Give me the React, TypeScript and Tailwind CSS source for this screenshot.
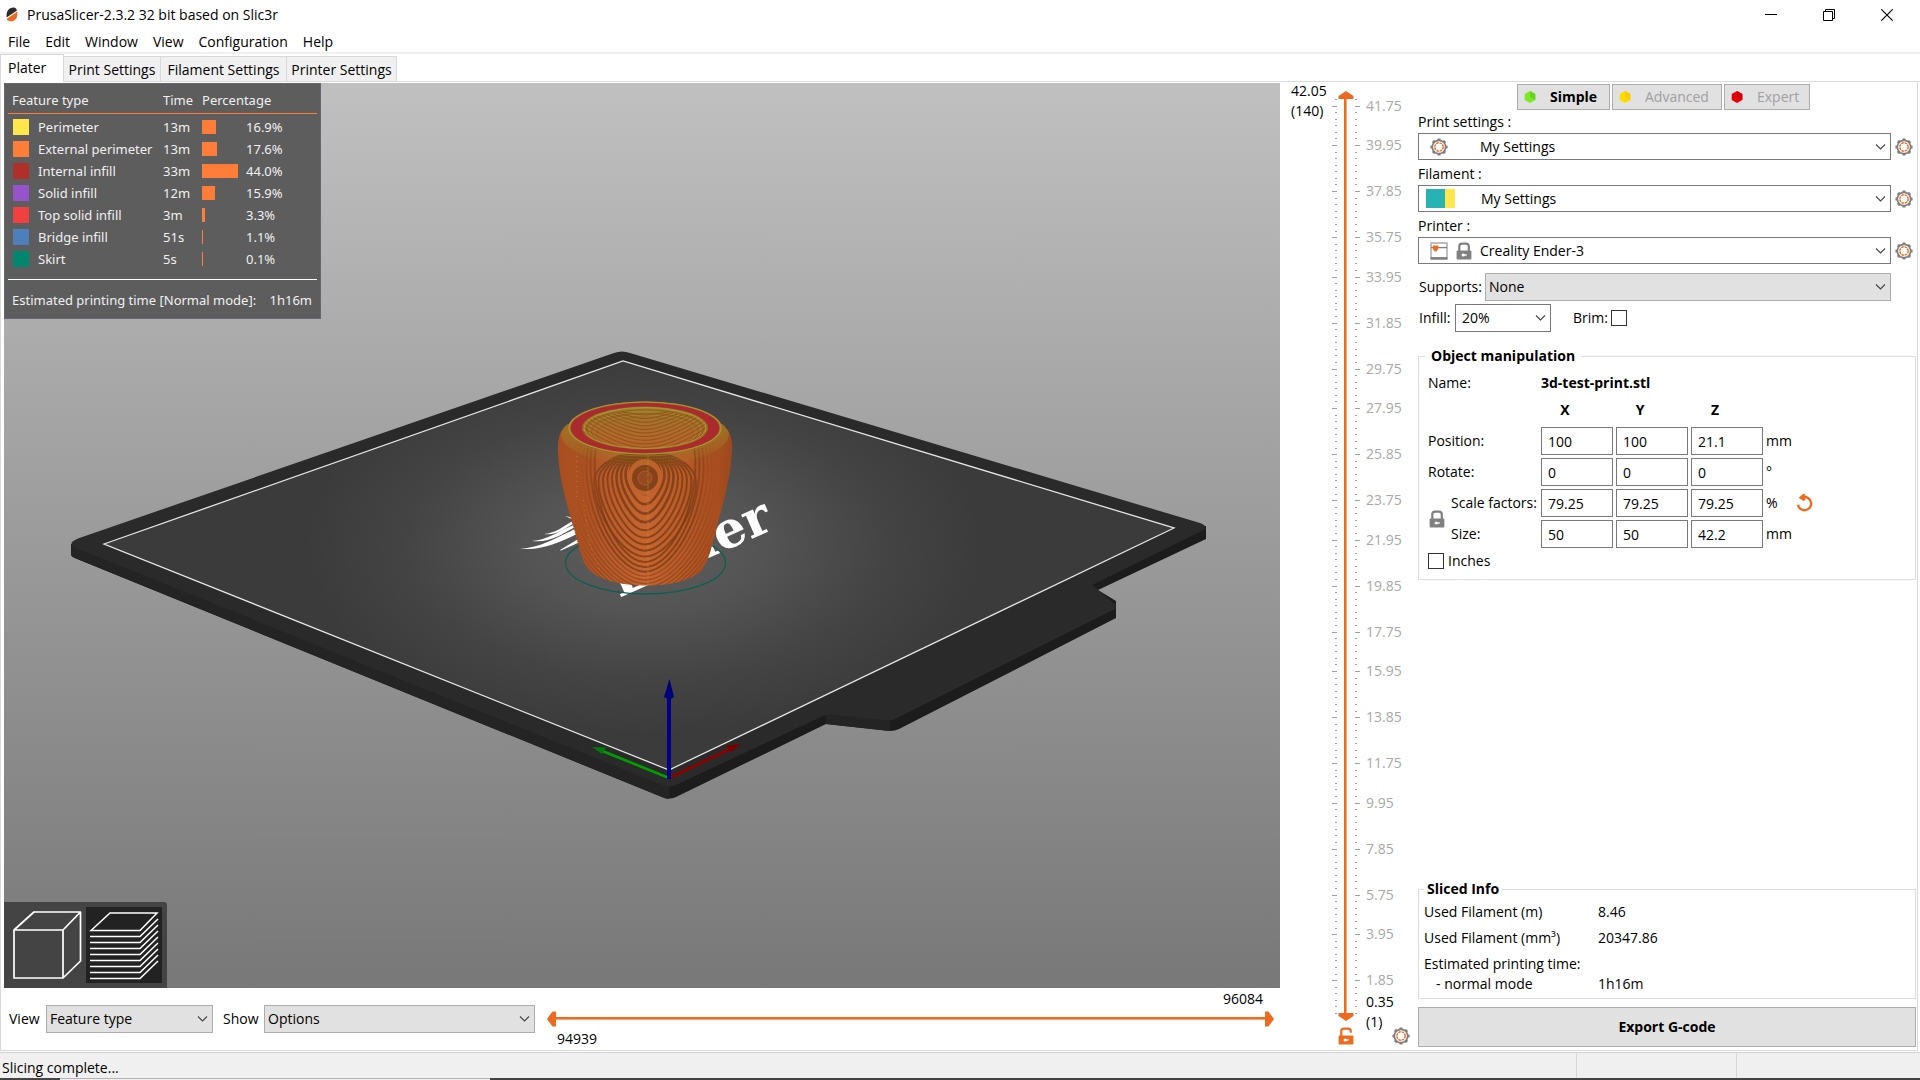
import React, { useState } from "react";

const ORANGE = "#ed6b21";

/* ---------- icons ---------- */

function Gear() {
  return (
    <svg width="18" height="18" viewBox="0 0 18 18" fill="none" aria-hidden="true">
      <circle cx="9" cy="9" r="6.7" stroke="#808080" strokeWidth="1.7" />
      {[0, 45, 90, 135, 180, 225, 270, 315].map((a) => (
        <rect key={a} x="7.4" y="0.4" width="3.2" height="2.4" rx="0.6" fill="#808080" transform={`rotate(${a} 9 9)`} />
      ))}
      <circle cx="9" cy="9" r="4.2" stroke={ORANGE} strokeWidth="1.4" strokeDasharray="2.5 0.8" />
    </svg>
  );
}

function Lock({ open = false, color = "#808080" }: { open?: boolean; color?: string }) {
  return (
    <svg width="16" height="18" viewBox="0 0 16 18" fill="none" aria-hidden="true">
      <path d={open ? "M3.3 9V4.2Q3.3 1.6 6 1.6H10Q12.8 1.6 12.8 4.2V5.8" : "M3.3 9V4.6Q3.3 1.6 6 1.6H10Q12.8 1.6 12.8 4.6V9"} stroke={color} strokeWidth="2.2" />
      <rect x="0.6" y="8.6" width="14.8" height="9" rx="1" fill={color} />
      <circle cx="7.2" cy="13" r="1.6" fill="#fff" />
      <rect x="7.5" y="12.3" width="3.2" height="1.4" fill="#fff" />
    </svg>
  );
}

function Chevron() {
  return (
    <svg width="11" height="7" viewBox="0 0 11 7" fill="none" className="pointer-events-none absolute top-1/2 right-[5px] -translate-y-1/2" aria-hidden="true">
      <path d="M1 1L5.5 5.5L10 1" stroke="#444" strokeWidth="1.1" />
    </svg>
  );
}

function PrinterIcon() {
  return (
    <svg width="18" height="18" viewBox="0 0 18 18" fill="none" aria-hidden="true">
      <path d="M1 1H17V17H1Z" stroke="#a8a8a8" strokeWidth="1.4" />
      <path d="M1 5.6H17" stroke="#808080" strokeWidth="1.3" />
      <path d="M1 15.6H17V17H1Z" fill="#808080" stroke="#808080" />
      <path d="M2.8 3.6H8.2V7L6.4 9.4H4.8L2.8 7Z" fill={ORANGE} />
    </svg>
  );
}

function Undo() {
  return (
    <svg width="18" height="20" viewBox="0 0 18 20" fill="none" aria-hidden="true">
      <path d="M7 4.2A6.6 6.6 0 1 1 2 11.6" stroke={ORANGE} strokeWidth="2.4" />
      <path d="M2.6 4.8L7.4 0.8L9.4 1.6V7L7.6 8Z" fill={ORANGE} />
    </svg>
  );
}

function Hex({ main, dark }: { main: string; dark: string }) {
  return (
    <svg width="12" height="12" viewBox="0 0 12 12" aria-hidden="true">
      <path d="M6 0L11.3 3V9L6 12L0.7 9V3Z" fill={main} />
      <path d="M6 0L11.3 3V9L6 6Z" fill={dark} />
    </svg>
  );
}

function Logo() {
  return (
    <svg width="12" height="15" viewBox="0 0 12 15" aria-hidden="true">
      <path d="M0.6 10.6C0 4 3 0.2 8.2 0.6Q10.6 1 11 3.4Z" fill="#2b2b2b" />
      <path d="M11.4 4.4C12 11 9 14.8 3.8 14.3Q1.2 14 0.8 11.8Z" fill={ORANGE} />
    </svg>
  );
}

/* ---------- 3D scene ---------- */

const BANDS = Array.from({ length: 34 }, (_, i) => i);

function grain(i: number) {
  const depth = 150 * (1 - Math.exp(-(i + 1.3) / 13));
  const half = 15 + 4.5 * i;
  const bottom = 480 + depth;
  const shoulder = 468 + depth * 0.3;
  if (i < 9) {
    const top = 460 - i;
    const waist = 474 + i;
    return `M645 ${top}C${645 - half * 0.7} ${top} ${645 - half} ${waist - 12} ${645 - half} ${waist}C${645 - half} ${waist + depth * 0.4} ${645 - half * 0.45} ${bottom} 645 ${bottom}S${645 + half} ${waist + depth * 0.4} ${645 + half} ${waist}C${645 + half} ${waist - 12} ${645 + half * 0.7} ${top} 645 ${top}`;
  }
  return `M${645 - half * 0.85} 438C${645 - half * 1.1} ${shoulder} ${645 - half * 0.5} ${bottom} 645 ${bottom}S${645 + half * 1.1} ${shoulder} ${645 + half * 0.85} 438`;
}

const BODY =
  "M568 424C560 430 558 438 558 448C558 473 566 503 573 525C580 549 582 562 589 570C600 580 622 585.500 646 585.500C672 585.500 692 580 702 570C709 560 712 546 718 522C725 496 732 470 732 446C732 437 729 430 722 424Z";

function Scene() {
  return (
    <svg viewBox="4 83 1276 905" preserveAspectRatio="xMidYMid slice" className="absolute inset-0 h-full w-full" role="img" aria-label="Sliced model on the print bed">
      <defs>
        <radialGradient id="bed" gradientUnits="userSpaceOnUse" cx="0" cy="0" r="1" gradientTransform="translate(645 545) scale(340 190)">
          <stop offset="0" stopColor="#5e5e5e" />
          <stop offset="0.35" stopColor="#545454" />
          <stop offset="0.7" stopColor="#444444" />
          <stop offset="1" stopColor="#3b3b3b" />
        </radialGradient>
        <linearGradient id="body" x1="0" x2="1" y1="0" y2="0">
          <stop offset="0" stopColor="#a44c1e" />
          <stop offset="0.2" stopColor="#b3562a" />
          <stop offset="0.5" stopColor="#c6652f" />
          <stop offset="0.8" stopColor="#b45626" />
          <stop offset="1" stopColor="#a34c1e" />
        </linearGradient>
        <linearGradient id="rim" x1="0" x2="0" y1="0" y2="1">
          <stop offset="0" stopColor="#a8842c" />
          <stop offset="1" stopColor="#a8842c" stopOpacity="0" />
        </linearGradient>
        <linearGradient id="hole" x1="0" x2="0" y1="0" y2="1">
          <stop offset="0" stopColor="#9c7a2a" />
          <stop offset="1" stopColor="#b8622a" />
        </linearGradient>
        <linearGradient id="edge" x1="0" x2="1" y1="0" y2="0">
          <stop offset="0" stopColor="#a84e20" />
          <stop offset="0.1" stopColor="#ab5021" />
          <stop offset="0.26" stopColor="#ab5021" stopOpacity="0" />
          <stop offset="0.76" stopColor="#a84e20" stopOpacity="0" />
          <stop offset="0.92" stopColor="#a84e20" />
          <stop offset="1" stopColor="#9c481c" />
        </linearGradient>
        <clipPath id="bodyClip">
          <path d={BODY} />
        </clipPath>
        <clipPath id="holeClip">
          <ellipse cx="645" cy="428" rx="63" ry="21" />
        </clipPath>
      </defs>

      {/* bed slab: sides, then top */}
      <path d="M71 544V555Q72 557 76 558.500L662 797Q669 800 676 797L826 724L890 731Q895 731 899 729L1116 618V601L1098 590L1206 539V526Z" fill="#1c1c1c" />
      <path d="M71 544V555Q72 557 76 558.500L662 797Q666 799 669 799V780Z" fill="#242424" />
      <path d="M826 710V724L890 731V716Z" fill="#242424" />
      <path d="M72 542Q74 540 78 538.500L614 353Q622 350 630 353L1200 523Q1208 526 1204 530L1092 585L1115 604Q1118 607 1113 610L895 719Q891 721 887 720.500L830 714.500Q827 714 823 716L676 785Q669 788 662 785L76 548Q70 545 72 542Z" fill="#2a2a2a" />
      <path d="M104 544L623 361L1174 528L669 770Z" fill="url(#bed)" stroke="#e6e6e6" strokeWidth="1.3" />

      {/* bed branding */}
      <text transform="translate(619 598) rotate(-24)" fontFamily="'DejaVu Serif', serif" fontWeight="700" fontSize="51" fill="#fff">
        Ender
      </text>
      <g fill="#fff">
        <path d="M520 548.500C540 548 556 538 577 528L577 534C558 543 540 551 520 548.500Z" />
        <path d="M532 541C548 540 560 530 576 524L577 526C560 535 550 543 532 541Z" />
        <path d="M544 534C556 533 562 527 576 519L577 521.500C564 529 556 536 544 534Z" />
        <path d="M560 550L580 538V542L561 550.500Z" />
        <path d="M565 516L574 518V520Z" />
      </g>
      <ellipse cx="645.500" cy="563" rx="80" ry="31" fill="none" stroke="#0b5f50" strokeWidth="1.3" />

      {/* printed cup */}
      <path d={BODY} fill="url(#body)" />
      <g clipPath="url(#bodyClip)" fill="none">
        {BANDS.map((i) => (
          <path key={i} d={grain(i)} stroke="#7c3d16" strokeWidth={i < 4 ? 2.6 : i < 12 ? 1.9 : 1.4} strokeOpacity={i < 12 ? 0.85 : 0.55} />
        ))}
        <ellipse cx="645" cy="477" rx="17" ry="18" fill="#bf612d" />
        <ellipse cx="645" cy="478" rx="13" ry="13" fill="#85411a" />
        <ellipse cx="645" cy="478" rx="7" ry="7" fill="#94491f" stroke="#b25a2a" strokeWidth="1" />
        <path d={BODY} fill="url(#edge)" />
        <path d="M648 455V585" stroke="#c88a3a" strokeOpacity="0.6" strokeDasharray="4 2" />
        <path d="M577 456V500M583 500L590 545L600 570" stroke="#d99a4a" strokeOpacity="0.6" strokeDasharray="1 4" />
        <ellipse cx="645" cy="434" rx="84" ry="31" fill="url(#rim)" />
        {[0, 1, 2, 3, 4].map((i) => (
          <ellipse key={i} cx="645" cy={430 + i * 2} rx={77 + i * 2} ry={26 + i} stroke="#8c7a20" strokeOpacity={0.8 - i * 0.14} strokeWidth="1" strokeDasharray={i ? "2 1" : undefined} />
        ))}
      </g>
      <ellipse cx="645" cy="428" rx="77" ry="26.500" fill="#a87a2c" />
      <ellipse cx="645" cy="428" rx="76" ry="26" fill="none" stroke="#a39a30" strokeWidth="1" />
      <ellipse cx="645" cy="428" rx="74.500" ry="25.200" fill="#a92b2d" />
      <ellipse cx="645" cy="428" rx="63" ry="21.500" fill="url(#hole)" />
      <g clipPath="url(#holeClip)" fill="none">
        {Array.from({ length: 6 }, (_, i) => (
          <ellipse key={i} cx="645" cy={428 + i * 1.2} rx={61 - i * 2.5} ry={20 - i * 0.6} stroke={i % 2 ? "#8a5a1c" : "#a3902e"} strokeOpacity={0.85 - i * 0.1} strokeWidth="1" />
        ))}
        {Array.from({ length: 12 }, (_, i) => (
          <path key={i} d={`M${622 - i * 5} ${412 + i * 0.8}C${636 - i * 2.4} ${414 + i * 3.4} ${642 - i} ${415 + i * 3.6} 645 ${415 + i * 3.6}S${654 + i * 2.4} ${414 + i * 3.4} ${668 + i * 5} ${412 + i * 0.8}`} stroke="#8c4a1c" strokeOpacity="0.8" strokeWidth="1" />
        ))}
        <path d="M600 412Q645 402 690 412" stroke="#6b4a70" strokeWidth="1" strokeDasharray="4 3" />
      </g>
      <ellipse cx="645" cy="428" rx="61" ry="20.500" fill="none" stroke="#a39a30" strokeWidth="1" />

      {/* axes */}
      <path d="M669 778L600 750" stroke="#00a000" strokeWidth="2.600" />
      <path d="M592 747L606 747.500L602 754Z" fill="#007a10" />
      <path d="M669 778L730 749" stroke="#8c0000" strokeWidth="2.800" />
      <path d="M741 744L726 745.500L731 752Z" fill="#780000" />
      <path d="M669 779V696" stroke="#00008c" strokeWidth="4" />
      <path d="M669.500 679L664 697Q669 701 674 697Z" fill="#00007c" />
    </svg>
  );
}

/* ---------- legend ---------- */

const FEATURES = [
  { name: "Perimeter", color: "#ffe64d", time: "13m", pct: "16.9%", bar: 14 },
  { name: "External perimeter", color: "#ff7d38", time: "13m", pct: "17.6%", bar: 15 },
  { name: "Internal infill", color: "#b02f2a", time: "33m", pct: "44.0%", bar: 36 },
  { name: "Solid infill", color: "#9654cc", time: "12m", pct: "15.9%", bar: 13 },
  { name: "Top solid infill", color: "#f04040", time: "3m", pct: "3.3%", bar: 3 },
  { name: "Bridge infill", color: "#4d80ba", time: "51s", pct: "1.1%", bar: 1 },
  { name: "Skirt", color: "#008770", time: "5s", pct: "0.1%", bar: 1 },
];

function Legend() {
  return (
    <div className="absolute top-0 left-0 w-[317px] border border-[#66666e] bg-[#5d5d5d] px-[3px] pt-[5px] pb-2 font-['Noto_Sans',sans-serif] text-[13px] leading-5 text-[#f0f0f0]">
      <table className="w-full table-fixed border-separate border-spacing-0 text-left">
        <colgroup>
          <col className="w-[30px]" />
          <col className="w-[125px]" />
          <col className="w-[39px]" />
          <col className="w-[44px]" />
          <col />
        </colgroup>
        <thead>
          <tr className="h-[25px] whitespace-nowrap [&>th]:border-b [&>th]:border-[#ff7d38] [&>th]:p-0 [&>th]:pb-0.5 [&>th]:font-normal">
            <th colSpan={2}><span className="pl-1">Feature type</span></th>
            <th>Time</th>
            <th colSpan={2}>Percentage</th>
          </tr>
        </thead>
        <tbody className="before:block before:h-0.5 before:content-['']">
          {FEATURES.map((f) => (
            <tr key={f.name} className="h-[22px] whitespace-nowrap [&>td]:p-0">
              <td>
                <span className="ml-[5px] block h-4 w-4" style={{ backgroundColor: f.color }} />
              </td>
              <td>{f.name}</td>
              <td>{f.time}</td>
              <td>
                <span className="block h-3.5 bg-[#ff7d38]" style={{ width: f.bar }} />
              </td>
              <td>{f.pct}</td>
            </tr>
          ))}
        </tbody>
      </table>
      <hr className="mt-[9px] border-t border-white" />
      <p className="mt-[10px] flex justify-between pr-[5px] pl-1 whitespace-nowrap">
        <span>Estimated printing time [Normal mode]:</span>
        <span>1h16m</span>
      </p>
    </div>
  );
}

function ViewToggle() {
  return (
    <div className="absolute bottom-0 left-0 flex gap-1 rounded-tr-[3px] bg-[#444] py-[5px] pr-[5px] pl-0.5">
      <button aria-label="3D editor view" className="h-[76px] w-[76px]">
        <svg width="76" height="76" viewBox="6 907 76 76" fill="none" stroke="#fff" strokeWidth="1.700" strokeLinejoin="round">
          <path d="M14 930H63V978H14ZM14 930L34 912H80.500L63 930M80.500 912V961L63 978" />
        </svg>
      </button>
      <button aria-label="Preview" className="h-[76px] w-[76px] bg-[#222]">
        <svg width="76" height="76" viewBox="86 907 76 76" fill="none" stroke="#fff" strokeWidth="1.500">
          <path d="M91 930.500L110 913H157L140 930.500Z" />
          {[936, 942, 948, 954, 960, 966, 972, 978].map((y) => (
            <path key={y} d={`M90 ${y + 0.5}H140L158 ${y - 17}`} />
          ))}
        </svg>
      </button>
    </div>
  );
}

/* ---------- layer slider ---------- */

const LABELS = [41.75, 39.95, 37.85, 35.75, 33.95, 31.85, 29.75, 27.95, 25.85, 23.75, 21.95, 19.85, 17.75, 15.95, 13.85, 11.75, 9.95, 7.85, 5.75, 3.95, 1.85];
const Z_TOP = 42.05;
const Z_LOW = 0.35;
const pos = (z: number) => `${((Z_TOP - z) / (Z_TOP - Z_LOW)) * 100}%`;
const LAYERS = Array.from({ length: 140 }, (_, i) => Math.round((Z_LOW + i * 0.3) * 100) / 100);

function LayerSlider() {
  return (
    <div className="relative flex w-[136px] shrink-0 flex-col pt-2">
      <div className="absolute top-[-2px] left-[11px] leading-5">
        42.05
        <br />
        (140)
      </div>
      <svg width="16" height="8" viewBox="0 0 16 8" className="ml-[58px] block"><path d="M8 0L15.500 5V8H0.500V5Z" fill={ORANGE} /></svg>
      <div className="relative flex-1">
        <div className="absolute inset-y-0 left-16 w-[3px] border-r border-[#f9a57b] bg-[#ed6b21]" />
        {LAYERS.map((z) => {
          const major = LABELS.includes(z);
          return (
            <div key={z} className={`absolute flex h-px justify-between ${major ? "left-[52px] w-[28px]" : "left-[55px] w-[22px]"}`} style={{ top: pos(z) }}>
              <span className={`h-px bg-[#a0a0a0] ${major ? "w-[5px]" : "w-0.5"}`} />
              <span className={`h-px bg-[#a0a0a0] ${major ? "w-[5px]" : "w-0.5"}`} />
            </div>
          );
        })}
        {LABELS.map((z) => (
          <span key={z} className="absolute left-[86px] -translate-y-1/2 leading-5 text-[#a8a8a8]" style={{ top: pos(z) }}>
            {z}
          </span>
        ))}
        <input type="range" aria-label="Layer height" min={1} max={140} defaultValue={140} className="absolute inset-y-0 left-[58px] w-4 cursor-pointer opacity-0 [writing-mode:vertical-lr]" />
      </div>
      <svg width="16" height="8" viewBox="0 0 16 8" className="ml-[58px] block"><path d="M8 8L15.500 3V0H0.500V3Z" fill={ORANGE} /></svg>
      <div className="absolute bottom-[18px] left-[86px] leading-5">
        0.35
        <br />
        (1)
      </div>
      <div className="flex h-[29px] items-start gap-[38px] pt-1.5 pl-[58px]">
        <button aria-label="Lock sliders"><Lock open color={ORANGE} /></button>
        <button aria-label="Slider settings"><Gear /></button>
      </div>
    </div>
  );
}

/* ---------- form parts ---------- */

function Combo({ id, value, box, text, children }: { id: string; value: string; box: string; text: string; children?: React.ReactNode }) {
  return (
    <div className={`relative ${box}`}>
      <select id={id} className={`block h-full w-full appearance-none border bg-transparent leading-5 outline-none ${text}`} defaultValue={value}>
        <option>{value}</option>
      </select>
      {children}
      <Chevron />
    </div>
  );
}

function Preset({ id, label, value, text, icon }: { id: string; label: string; value: string; text: string; icon: React.ReactNode }) {
  return (
    <div>
      <label htmlFor={id} className="block h-[21px] leading-5">{label}</label>
      <div className="flex items-center gap-1">
        <Combo id={id} value={value} box="h-[27px] flex-1" text={`border-[#7a7a7a] ${text}`}>
          <span className="pointer-events-none absolute inset-y-0 left-[8px] flex items-center">{icon}</span>
        </Combo>
        <button aria-label={`Edit ${value}`}><Gear /></button>
      </div>
    </div>
  );
}

const CHECK = "h-4 w-4 appearance-none border border-[#333] bg-white checked:bg-[#333]";

function AxisInputs({ label, values }: { label: string; values: string[] }) {
  return (
    <>
      {values.map((v, i) => (
        <input key={i} aria-label={`${label} ${"XYZ"[i]}`} defaultValue={v} className="h-7 w-full border border-[#7a7a7a] bg-white px-1.5 outline-none" />
      ))}
    </>
  );
}

function SidePanel() {
  return (
    <aside className="flex w-[501px] shrink-0 flex-col pt-px pr-px pb-[3px] pl-0.5">
      <div className="ml-[99px] flex gap-0.5 [&>button]:flex [&>button]:h-[26px] [&>button]:items-center [&>button]:border [&>button]:border-[#adadad] [&>button]:bg-[#e1e1e1] [&>button]:pl-[6px]">
        <button className="w-[93px] gap-[14px] font-bold"><Hex main="#7aea26" dark="#66d41c" />Simple</button>
        <button className="w-[110px] gap-[14px] text-[#a0a0a0]"><Hex main="#ffdc00" dark="#f8cc00" />Advanced</button>
        <button className="w-[86px] gap-[14px] text-[#a0a0a0]"><Hex main="#e80000" dark="#d00000" />Expert</button>
      </div>

      <div className="mt-0.5 flex flex-col gap-1 pr-[3px]">
        <Preset id="print" label="Print settings :" value="My Settings" text="pl-[61px]" icon={<span className="pl-1"><Gear /></span>} />
        <Preset
          id="filament"
          label="Filament :"
          value="My Settings"
          text="pl-[62px]"
          icon={<><span className="h-[19px] w-[19px] bg-[#29b2b2]" /><span className="h-[19px] w-2.5 bg-[#ffe64d]" /></>}
        />
        <Preset id="printer" label="Printer :" value="Creality Ender-3" text="pl-[61px]" icon={<span className="flex gap-2 pl-1"><PrinterIcon /><Lock /></span>} />
      </div>

      <div className="mt-[9px] mr-[25px] flex items-center">
        <label htmlFor="supports" className="w-[67px] pl-px">Supports:</label>
        <Combo id="supports" value="None" box="h-7 flex-1 bg-[#e1e1e1]" text="border-[#adadad] pl-[3px]" />
      </div>
      <div className="mt-[3px] flex items-center">
        <label htmlFor="infill" className="w-[37px] pl-px">Infill:</label>
        <Combo id="infill" value="20%" box="h-7 w-[96px]" text="border-[#7a7a7a] pl-1.5" />
        <label className="ml-[22px] flex items-center gap-[3px]">
          Brim:
          <input type="checkbox" className={CHECK} />
        </label>
      </div>

      <fieldset className="mt-[14px] border border-[#dcdcdc] pb-2 pl-[9px]">
        <legend className="-ml-[3px] px-1.5 leading-5 font-bold">Object manipulation</legend>
        <div className="grid grid-cols-[20px_87px_72px_72px_72px_auto] items-center gap-x-[3px] pt-[7px] leading-5">
          <span className="col-span-2">Name:</span>
          <b className="col-span-4">3d-test-print.stl</b>
        </div>
        <div className="mt-[7px] mb-[7px] ml-[113px] flex gap-[3px] leading-5 font-bold [&>span]:w-[72px] [&>span]:pr-6 [&>span]:text-center">
          <span>X</span>
          <span>Y</span>
          <span>Z</span>
        </div>
        <div className="grid grid-cols-[20px_87px_72px_72px_72px_24px_auto] items-center gap-[3px] whitespace-nowrap">
          <span className="col-span-2">Position:</span>
          <AxisInputs label="Position" values={["100", "100", "21.1"]} />
          <span className="col-span-2">mm</span>
          <span className="col-span-2">Rotate:</span>
          <AxisInputs label="Rotate" values={["0", "0", "0"]} />
          <span className="col-span-2">°</span>
          <button aria-label="Lock proportions" className="row-span-2 pl-px"><Lock /></button>
          <span>Scale factors:</span>
          <AxisInputs label="Scale" values={["79.25", "79.25", "79.25"]} />
          <span>%</span>
          <button aria-label="Reset scale" className="justify-self-start pl-[3px]"><Undo /></button>
          <span>Size:</span>
          <AxisInputs label="Size" values={["50", "50", "42.2"]} />
          <span className="col-span-2">mm</span>
        </div>
        <label className="mt-[3px] flex w-fit items-center gap-1 leading-5">
          <input type="checkbox" className={CHECK} />
          Inches
        </label>
      </fieldset>

      <fieldset className="mt-auto border border-[#dcdcdc] pb-1 pl-[5px]">
        <legend className="px-[3px] leading-5 font-bold">Sliced Info</legend>
        <dl className="grid grid-cols-[174px_1fr] pt-[3px] leading-5">
          <dt>Used Filament (m)</dt>
          <dd>8.46</dd>
          <dt className="mt-1.5">Used Filament (mm³)</dt>
          <dd className="mt-1.5">20347.86</dd>
          <dt className="col-span-2 mt-1.5">Estimated printing time:</dt>
          <dt className="pl-3">- normal mode</dt>
          <dd>1h16m</dd>
        </dl>
      </fieldset>
      <button className="mt-2 h-10 border border-[#adadad] bg-[#e1e1e1] font-bold">Export G-code</button>
    </aside>
  );
}

/* ---------- window ---------- */

const TABS = [
  { name: "Plater", width: "w-16" },
  { name: "Print Settings", width: "w-[97px]" },
  { name: "Filament Settings", width: "w-[126px]" },
  { name: "Printer Settings", width: "w-[110px]" },
];

export default function App() {
  const [tab, setTab] = useState("Plater");
  return (
    <div className="flex h-screen flex-col overflow-hidden bg-white font-['Open_Sans','Noto_Sans',sans-serif] text-[14px] leading-5 text-black">
      <header className="flex h-[29px] shrink-0 items-center pr-1 pl-1.5">
        <Logo />
        <h1 className="ml-[9px] flex-1">PrusaSlicer-2.3.2 32 bit based on Slic3r</h1>
        <div className="flex [&>button]:flex [&>button]:h-7 [&>button]:w-[58px] [&>button]:items-center [&>button]:justify-center">
          <button aria-label="Minimize"><svg width="12" height="12" viewBox="0 0 12 12"><path d="M0 5.500H12" stroke="#000" /></svg></button>
          <button aria-label="Restore"><svg width="12" height="12" viewBox="0 0 12 12" fill="none" stroke="#000"><path d="M0.500 2.500H9.500V11.500H0.500ZM2.500 2.500V0.500H11.500V9.500H9.500" /></svg></button>
          <button aria-label="Close"><svg width="12" height="12" viewBox="0 0 12 12" stroke="#000" strokeWidth="1.100"><path d="M0.300 0.300L11.700 11.700M11.700 0.300L0.300 11.700" /></svg></button>
        </div>
      </header>
      <nav className="flex h-[25px] shrink-0 items-start gap-[15px] border-b-2 border-[#f0f0f0] pt-[3px] pl-2">
        {["File", "Edit", "Window", "View", "Configuration", "Help"].map((m) => (
          <button key={m}>{m}</button>
        ))}
      </nav>

      <div role="tablist" className="flex h-7 shrink-0 items-end border-b border-[#d9d9d9]">
        {TABS.map((t) =>
          t.name === tab ? (
            <button key={t.name} role="tab" aria-selected="true" className={`relative top-px h-7 border border-b-0 border-[#d9d9d9] bg-white pb-0.5 pl-[7px] text-left whitespace-nowrap ${t.width}`}>
              {t.name}
            </button>
          ) : (
            <button key={t.name} role="tab" aria-selected="false" onClick={() => setTab(t.name)} className={`h-[25px] border-t border-r border-[#d9d9d9] bg-[#f0f0f0] pt-0.5 text-center whitespace-nowrap ${t.width}`}>
              {t.name}
            </button>
          ),
        )}
      </div>

      <main className="mr-0.5 flex min-h-0 flex-1 border-x border-b border-[#d9d9d9] pt-px">
        <section className="flex min-w-0 flex-1 flex-col pl-[3px]">
          <div className="relative min-h-0 flex-1 overflow-hidden bg-linear-to-b from-[#c0c0c0] to-[#787878]">
            <Scene />
            <Legend />
            <ViewToggle />
          </div>
          <div className="flex h-[62px] shrink-0 items-center pb-px pl-[5px]">
            <label htmlFor="view" className="w-[37px]">View</label>
            <Combo id="view" value="Feature type" box="h-7 w-[167px] bg-[#e1e1e1]" text="border-[#adadad] pl-[3px]" />
            <label htmlFor="show" className="w-[51px] pl-2.5">Show</label>
            <Combo id="show" value="Options" box="h-7 w-[271px] bg-[#e1e1e1]" text="border-[#adadad] pl-[3px]" />
            <div className="relative mr-1.5 ml-3 flex-1">
              <div className="h-5 pr-[11px] text-right">96084</div>
              <div className="flex h-5 items-center">
                <svg width="9" height="16" viewBox="0 0 9 16"><path d="M0 8L5.500 0.500H9V15.500H5.500Z" fill={ORANGE} /></svg>
                <div className="h-[3px] flex-1 border-b border-[#f9a57b] bg-[#ed6b21]" />
                <svg width="9" height="16" viewBox="0 0 9 16"><path d="M9 8L3.500 0.500H0V15.500H3.500Z" fill={ORANGE} /></svg>
              </div>
              <div className="h-5 pl-2.5">94939</div>
              <input type="range" aria-label="Moves" min={94939} max={96084} defaultValue={96084} className="absolute inset-x-0 top-5 h-5 w-full cursor-pointer opacity-0" />
            </div>
          </div>
        </section>
        <LayerSlider />
        <SidePanel />
      </main>

      <footer className="mt-px flex h-[26px] shrink-0 border-t border-[#d0d0d0] bg-[#f0f0f0]">
        <p className="flex-1 pt-[5px] pl-0.5">Slicing complete...</p>
        <div className="w-[160px] border-l border-[#d7d7d7]" />
        <div className="w-[184px] border-l border-[#d7d7d7]" />
      </footer>
      <div className="flex h-0.5 shrink-0 bg-[#444]">
        <div className="ml-[60px] w-[430px] border-t border-[#b4b4b4] bg-[#f0f0f0]" />
      </div>
    </div>
  );
}
